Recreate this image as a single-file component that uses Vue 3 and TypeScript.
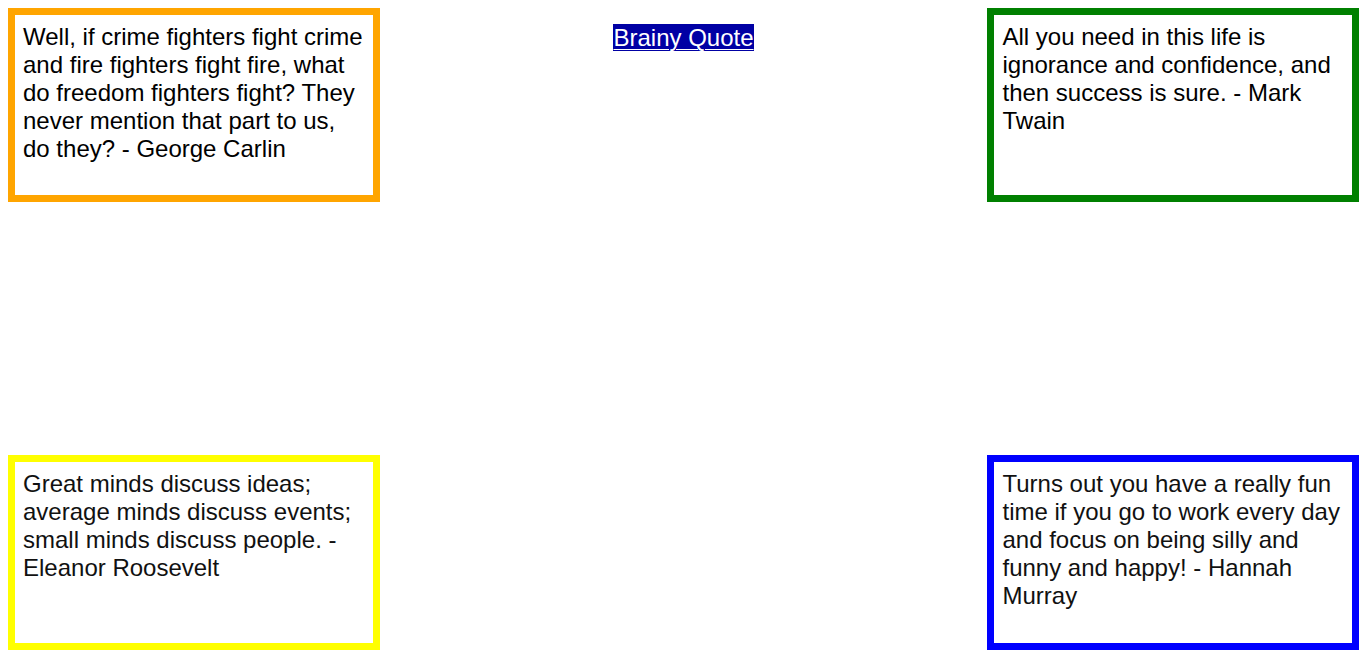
<script setup lang="ts">
interface Quote {
  text: string
  tone: string
}

const rows: Quote[][] = [
  [
    {
      text: 'Well, if crime fighters fight crime and fire fighters fight fire, what do freedom fighters fight? They never mention that part to us, do they? - George Carlin',
      tone: 'orange',
    },
    {
      text: 'All you need in this life is ignorance and confidence, and then success is sure. - Mark Twain',
      tone: 'green',
    },
  ],
  [
    {
      text: 'Great minds discuss ideas; average minds discuss events; small minds discuss people. - Eleanor Roosevelt',
      tone: 'yellow',
    },
    {
      text: 'Turns out you have a really fun time if you go to work every day and focus on being silly and funny and happy! - Hannah Murray',
      tone: 'blue',
    },
  ],
]
</script>

<template>
  <main class="page">
    <div v-for="(row, index) in rows" :key="index" class="row">
      <blockquote class="quote" :class="row[0].tone">{{ row[0].text }}</blockquote>
      <a v-if="index === 0" class="source" href="#">Brainy Quote</a>
      <blockquote class="quote" :class="row[1].tone">{{ row[1].text }}</blockquote>
    </div>
  </main>
</template>

<style scoped>
.page {
  box-sizing: border-box;
  min-height: 100vh;
  padding: 8px 7px 7px 8px;
  display: flex;
  flex-direction: column;
  justify-content: space-between;
  background: #fff;
  color: #000;
  font-family: "Liberation Sans", Arial, sans-serif;
  font-size: 24px;
  line-height: 28px;
}

.row {
  display: flex;
  justify-content: space-between;
  align-items: flex-start;
}

.quote {
  box-sizing: border-box;
  width: 27.5%;
  min-height: 194px;
  margin: 0;
  padding: 8px;
  border: 7px solid;
}

.orange {
  border-color: orange;
}

.green {
  border-color: green;
}

.yellow,
.blue {
  min-height: 195px;
  color: #111;
}

.yellow {
  border-color: yellow;
}

.blue {
  border-color: blue;
}

.source {
  margin-top: 16px;
  background: #0000a4;
  color: #fff;
  line-height: 27px;
  text-decoration-thickness: 1px;
  text-underline-offset: 3px;
}
</style>
